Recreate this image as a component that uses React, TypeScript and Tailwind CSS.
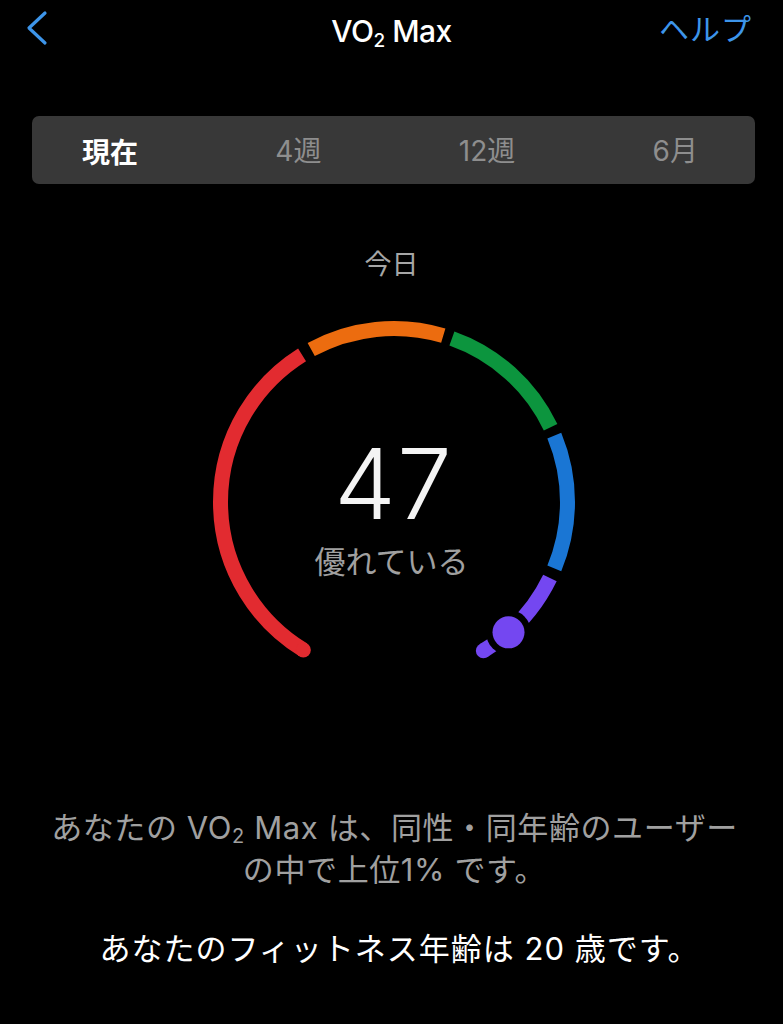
import React from "react";

const CX = 394;
const CY = 202;
const R = 173.5;

function pt(deg: number): [number, number] {
  const t = (deg * Math.PI) / 180;
  return [CX + R * Math.sin(t), CY - R * Math.cos(t)];
}

function arc(a1: number, a2: number): string {
  const [x1, y1] = pt(a1);
  const [x2, y2] = pt(a2);
  const large = a2 - a1 > 180 ? 1 : 0;
  return `M ${x1.toFixed(2)} ${y1.toFixed(2)} A ${R} ${R} 0 ${large} 1 ${x2.toFixed(2)} ${y2.toFixed(2)}`;
}

const segments = [
  { a1: -148.5, a2: -32, color: "#e22b30" },
  { a1: -28.5, a2: 16.5, color: "#ec6c0f" },
  { a1: 19.5, a2: 64.5, color: "#0c953e" },
  { a1: 67.5, a2: 112.5, color: "#1a76d4" },
  { a1: 116, a2: 149, color: "#7447f1" },
];

function Gauge() {
  const [rx, ry] = pt(-148.5);
  const [px, py] = pt(149);
  const [dx, dy] = pt(138.7);
  return (
    <svg viewBox="0 0 783 380" className="block w-full h-[380px]">
      {segments.map((s, i) => (
        <path
          key={i}
          d={arc(s.a1, s.a2)}
          fill="none"
          stroke={s.color}
          strokeWidth={15}
          strokeLinecap="butt"
        />
      ))}
      <circle cx={rx} cy={ry} r={7.5} fill="#e22b30" />
      <circle cx={px} cy={py} r={7.5} fill="#7447f1" />
      <circle cx={dx} cy={dy} r={22.5} fill="#000000" />
      <circle cx={dx} cy={dy} r={16} fill="#7447f1" />
    </svg>
  );
}

export default function App() {
  return (
    <div className="w-[783px] h-[1024px] bg-black overflow-hidden font-['Inter','Noto_Sans_CJK_JP',sans-serif] text-white">
      {/* Header */}
      <div className="relative h-[56px] flex items-center justify-between pl-[26px] pr-[31px]">
        <svg width="22" height="36" viewBox="0 0 22 36" className="block">
          <path
            d="M19 3 L3 18 L19 33"
            fill="none"
            stroke="#3d95ea"
            strokeWidth={3.2}
            strokeLinecap="round"
            strokeLinejoin="round"
          />
        </svg>
        <div className="absolute left-0 right-0 top-0 h-[56px] flex items-center justify-center pt-[6px] pointer-events-none">
          <span className="text-[30px] leading-[36px] font-medium tracking-[-0.5px] text-white">
            VO<span className="text-[19px] leading-none align-[-5px]">2</span> Max
          </span>
        </div>
        <span className="text-[30px] leading-[36px] text-[#3d95ea] font-['Noto_Sans_CJK_JP',sans-serif] tracking-[1px] -mt-[2px]">
          ヘルプ
        </span>
      </div>

      {/* Segmented control */}
      <div className="mx-[32px] w-[723px] mt-[60px] h-[68px] rounded-[7px] bg-[#383838] flex items-center justify-between pl-[50px] pr-[57px] text-[28px] leading-[36px] pt-[2px]">
        <span className="font-bold text-white font-['Noto_Sans_CJK_JP',sans-serif]">現在</span>
        <span className="text-[#8e8e8e]">4週</span>
        <span className="text-[#8e8e8e]">12週</span>
        <span className="text-[#8e8e8e]">6月</span>
      </div>

      {/* Today label */}
      <div className="mt-[63px] text-center text-[27px] leading-[36px] text-[#a6a6a6]">今日</div>

      {/* Gauge */}
      <div className="relative mt-[17px] h-[380px]">
        <Gauge />
        <div className="absolute left-0 right-0 top-[129px] flex justify-center pl-[4px]">
          <span className="text-[98px] leading-[110px] font-light text-[#f4f4f4] tracking-[1px]">47</span>
        </div>
        <div className="absolute left-0 right-0 top-[242px] flex justify-center">
          <span className="text-[31px] leading-[40px] text-[#a0a0a0]">優れている</span>
        </div>
      </div>

      {/* Description */}
      <div className="mt-[127px] text-center text-[31px] leading-[42px] text-[#a0a0a0] tracking-[0.6px] pl-[6px]">
        <div className="h-[42px]">
          あなたの VO<span className="text-[20px] leading-none align-[-4px]">2</span> Max は、同性・同年齢のユーザー
        </div>
        <div className="h-[42px]">の中で上位1% です。</div>
      </div>
      <div className="mt-[37px] text-center text-[31px] leading-[42px] text-white tracking-[1px] pl-[16px]">
        あなたのフィットネス年齢は 20 歳です。
      </div>
    </div>
  );
}
